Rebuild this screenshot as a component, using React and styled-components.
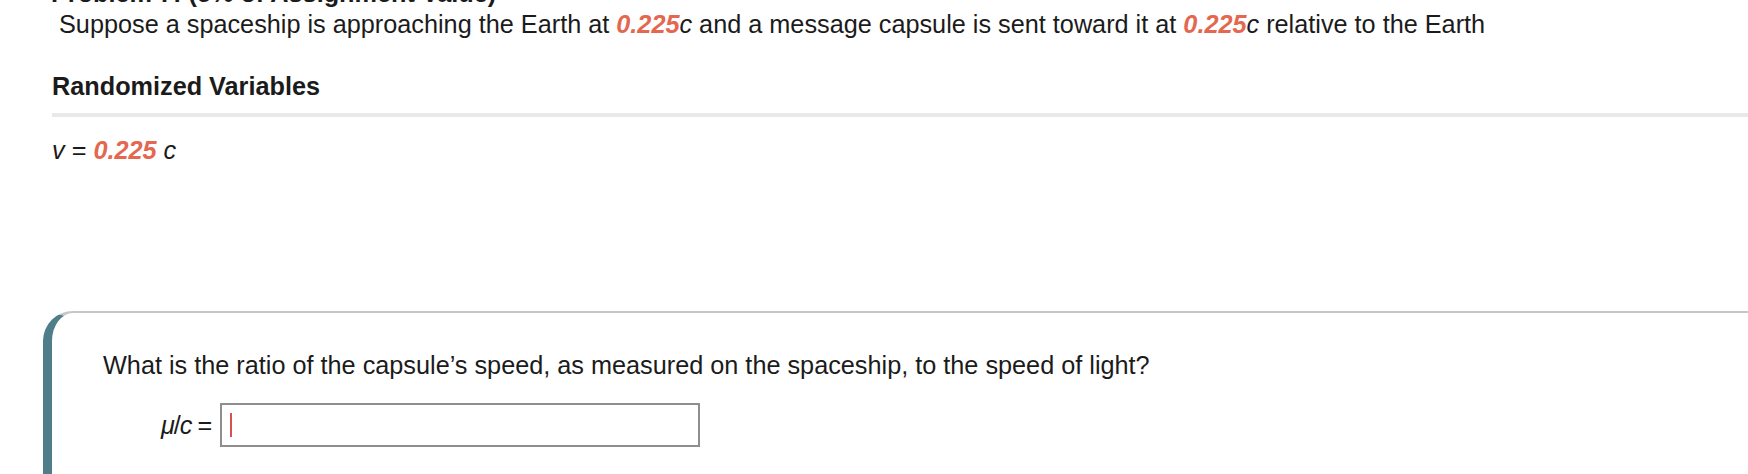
import React from 'react'
import styled, { createGlobalStyle } from 'styled-components'

const GlobalStyle = createGlobalStyle`
  html, body {
    margin: 0;
    padding: 0;
    background: #ffffff;
  }
  body {
    font-family: "Liberation Sans", Helvetica, Arial, sans-serif;
    color: #1b1b1b;
    overflow: hidden;
  }
`

const Page = styled.div`
  width: 1748px;
  height: 474px;
  overflow: hidden;
`

// the problem heading is scrolled mostly out of view in the screenshot
const ProblemTitle = styled.h2`
  margin: -22px 0 0 51px;
  font-size: 25.25px;
  line-height: 30px;
  font-weight: bold;
  color: #1b1b1b;
`

const Statement = styled.p`
  margin: 1px 0 0 59px;
  font-size: 25.25px;
  line-height: 30px;
`

const Value = styled.span`
  color: #e4674f;
  font-weight: bold;
  font-style: italic;
`

const Var = styled.i`
  font-style: italic;
`

const SectionHeading = styled.h3`
  margin: 32px 0 0 52px;
  font-size: 25.25px;
  line-height: 30px;
  font-weight: bold;
`

const Rule = styled.div`
  margin: 12px 0 0 52px;
  height: 4px;
  background: #e9e9e9;
`

const VariableLine = styled.div`
  margin: 18px 0 0 52px;
  font-size: 25.25px;
  line-height: 30px;
`

const Card = styled.section`
  margin: 146px 0 0 43px;
  border-top: 2px solid #c6c6c6;
  border-left: 9px solid #4f7e8a;
  border-top-left-radius: 30px;
  padding: 37px 0 40px 51px;
`

const Question = styled.p`
  margin: 0;
  font-size: 25.25px;
  line-height: 30px;
`

const AnswerRow = styled.div`
  margin: 23px 0 0 58px;
  display: flex;
  align-items: center;
  gap: 9px;
`

const Label = styled.span`
  font-size: 25.25px;
  line-height: 30px;
  letter-spacing: -1px;
`

const AnswerBox = styled.div`
  box-sizing: border-box;
  width: 480px;
  height: 44px;
  border: 2px solid #8e8e8e;
  display: flex;
  align-items: center;
  padding-left: 8px;
`

const Caret = styled.span`
  width: 2px;
  height: 24px;
  background: #d85050;
`

export default function App() {
  return (
    <Page>
      <GlobalStyle />
      <ProblemTitle>Problem 7: (5% of Assignment Value)</ProblemTitle>
      <Statement>
        Suppose a spaceship is approaching the Earth at <Value>0.225</Value><Var>c</Var> and a
        message capsule is sent toward it at <Value>0.225</Value><Var>c</Var> relative to the Earth
      </Statement>

      <SectionHeading>Randomized Variables</SectionHeading>
      <Rule />
      <VariableLine>
        <Var>v</Var> = <Value>0.225</Value> <Var>c</Var>
      </VariableLine>

      <Card>
        <Question>
          What is the ratio of the capsule’s speed, as measured on the spaceship, to the speed of light?
        </Question>
        <AnswerRow>
          <Label><Var>μ</Var>/<Var>c</Var> =</Label>
          <AnswerBox>
            <Caret />
          </AnswerBox>
        </AnswerRow>
      </Card>
    </Page>
  )
}
